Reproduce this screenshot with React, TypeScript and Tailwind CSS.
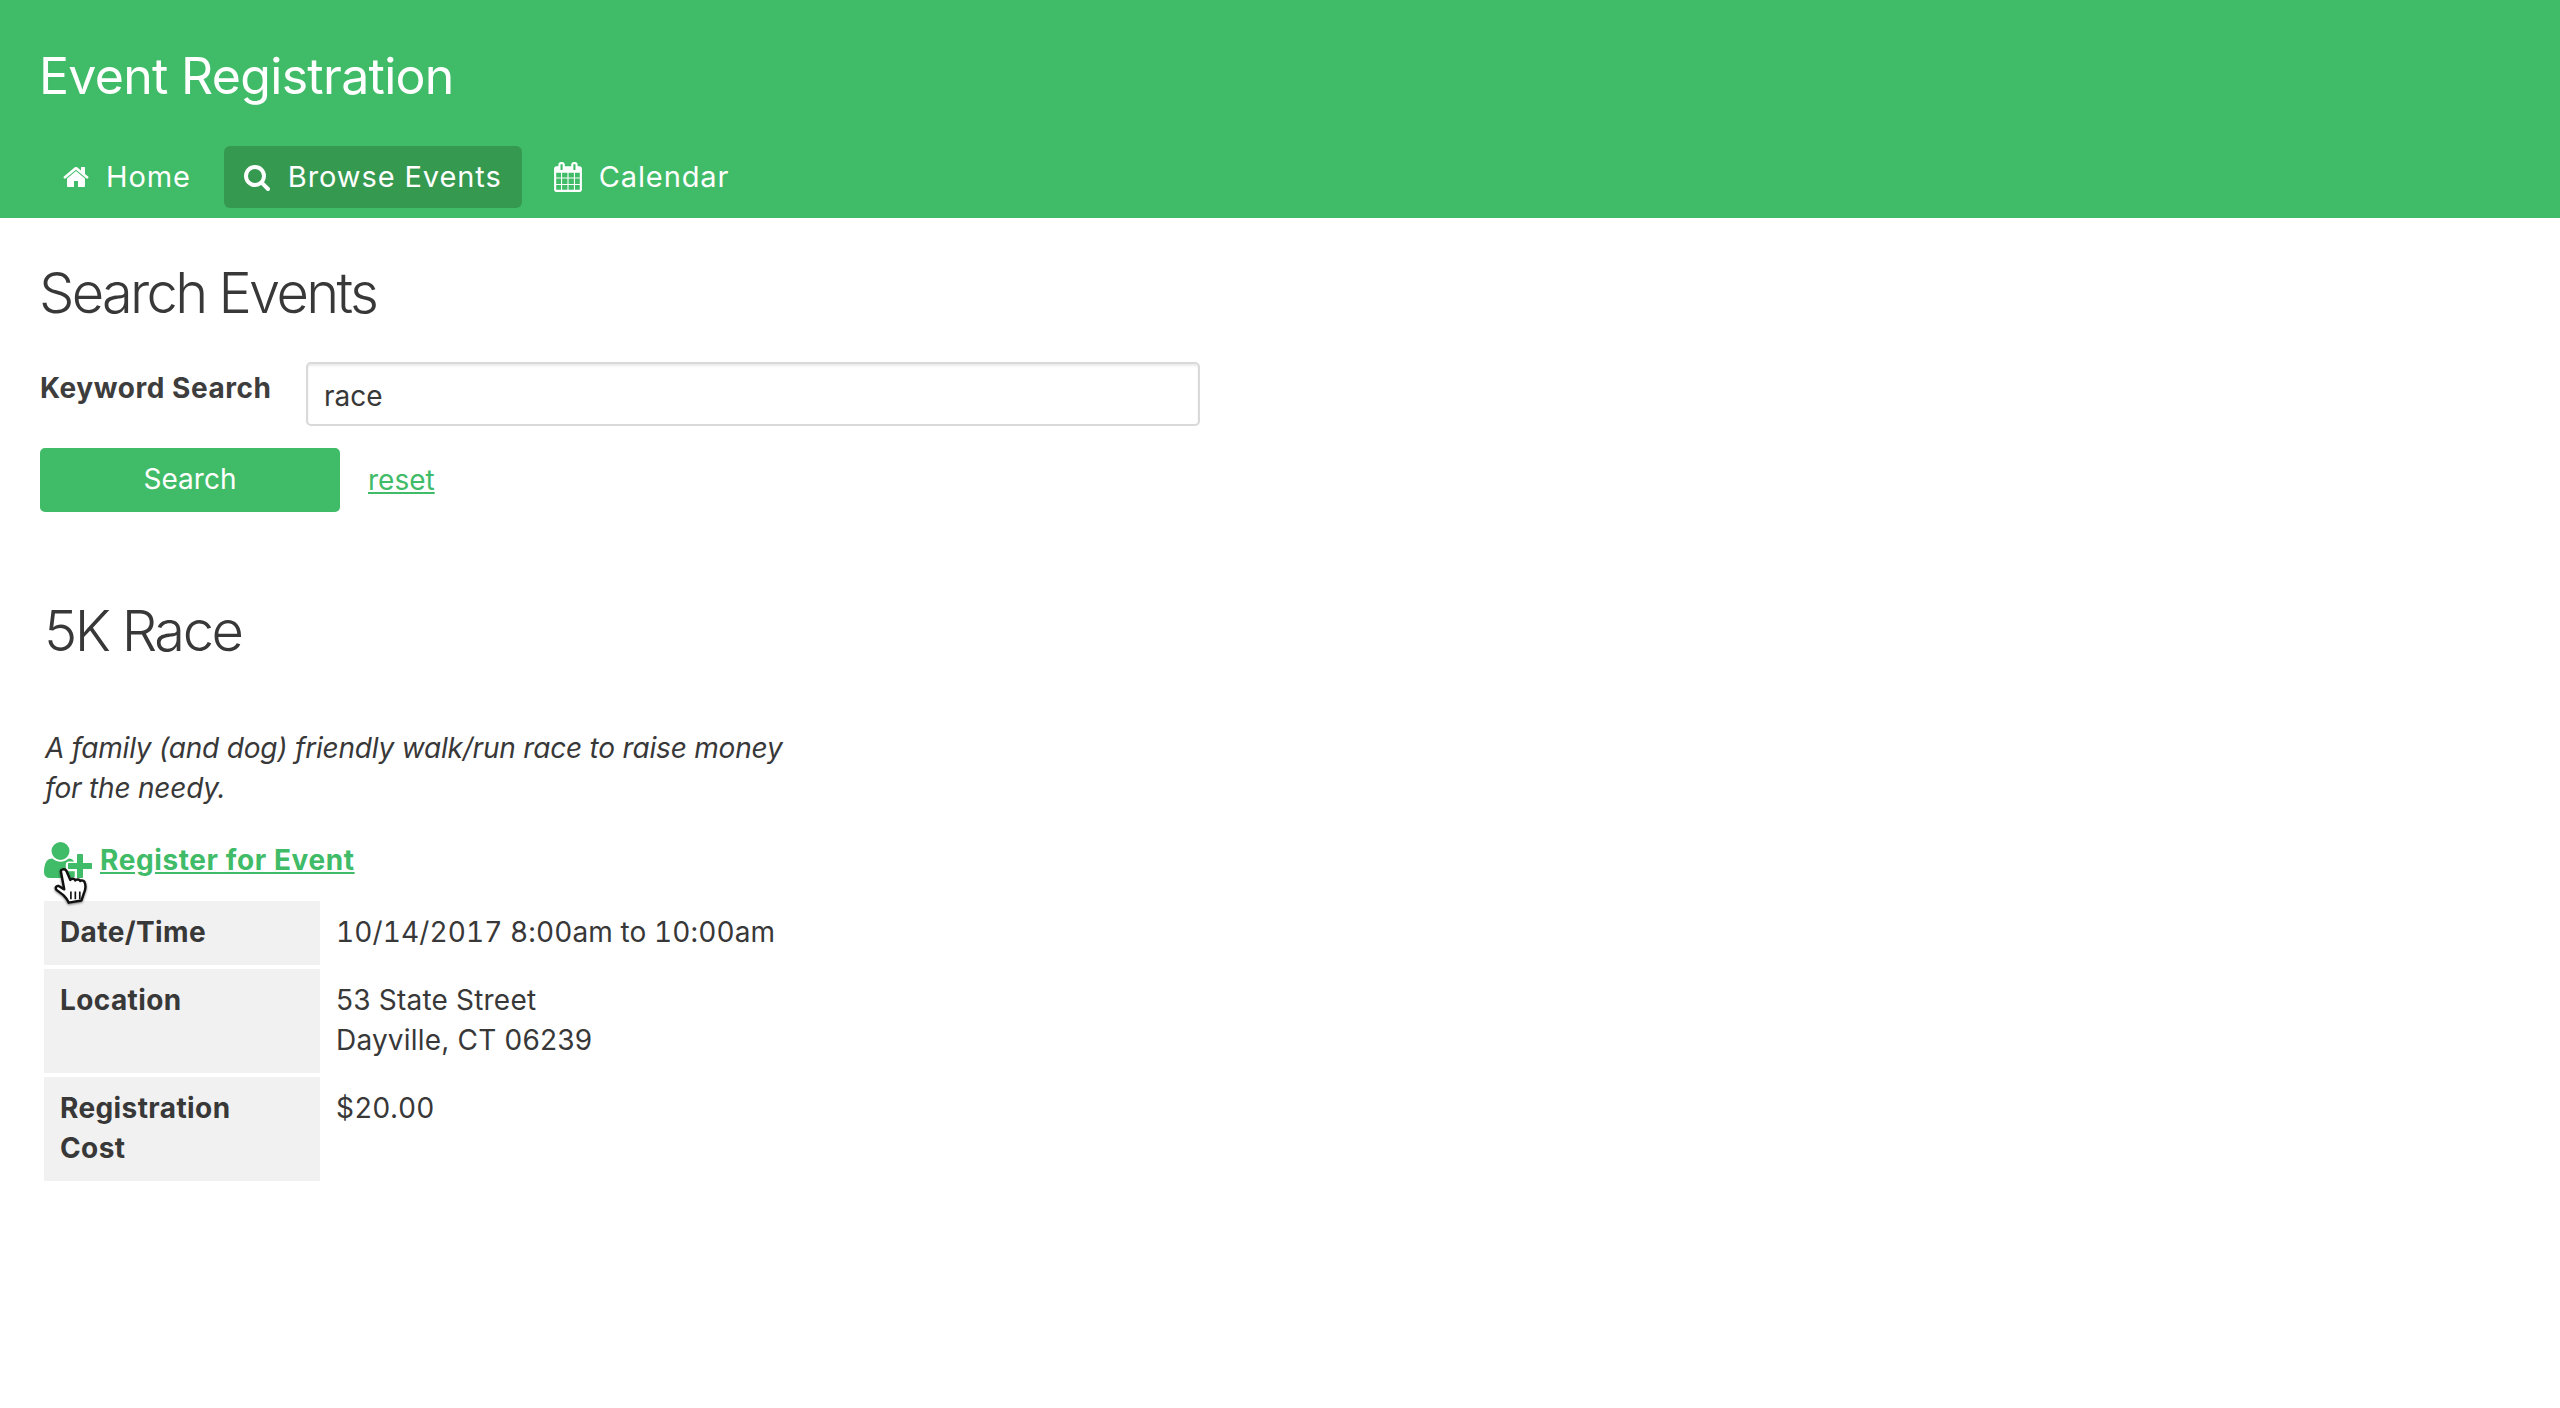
export default function App() {
  return (
    <div className="min-h-[1408px] bg-white text-[#383838] font-['Inter','Liberation_Sans',sans-serif] text-[28px] leading-[40px]">
      <header className="h-[218px] bg-[#40bb67] px-10 flex flex-col text-white">
        <h1 className="text-[50px] leading-[60px] font-normal mt-[46px] -ml-[1px] tracking-[-0.7px]">Event Registration</h1>
        <nav className="mt-[40px] flex gap-[11px] text-[29px] tracking-[0.9px]">
          <a className="h-[62px] px-[22px] flex items-center gap-[16px] rounded-md">
            <svg className="w-[28px] h-[28px]" viewBox="0 0 1792 1792" fill="currentColor"><path d="M1472 992v480q0 26-19 45t-45 19h-384v-384h-256v384h-384q-26 0-45-19t-19-45v-480q0-1 .5-3t.5-3l575-474 575 474q1 2 1 6zm223-69l-62 74q-8 9-21 11h-3q-13 0-21-7l-692-577-692 577q-12 8-24 7-13-2-21-11l-62-74q-8-10-7-23.5t11-21.5l719-599q32-26 76-26t76 26l244 204v-195q0-14 9-23t23-9h192q14 0 23 9t9 23v408l219 182q10 8 11 21.5t-7 23.5z" /></svg>
            Home
          </a>
          <a className="h-[62px] pl-[19px] pr-[20px] flex items-center gap-[17px] rounded-md bg-[#35994f]">
            <svg className="w-[28px] h-[28px]" viewBox="0 0 1792 1792" fill="currentColor"><path d="M1216 832q0-185-131.500-316.500t-316.500-131.500-316.500 131.500-131.500 316.500 131.500 316.500 316.500 131.500 316.500-131.500 131.500-316.500zm512 832q0 52-38 90t-90 38q-54 0-90-38l-343-342q-179 124-399 124-143 0-273.500-55.500t-225-150-150-225-55.500-273.500 55.500-273.500 150-225 225-150 273.500-55.500 273.500 55.500 225 150 150 225 55.500 273.500q0 220-124 399l343 343q37 37 37 90z" /></svg>
            Browse Events
          </a>
          <a className="h-[62px] px-[20px] flex items-center gap-[16px] rounded-md">
            <svg className="w-[30px] h-[30px]" viewBox="0 0 1664 1792" fill="currentColor"><path d="M128 1664h288v-288h-288v288zm352 0h320v-288h-320v288zm-352-352h288v-320h-288v320zm352 0h320v-320h-320v320zm-352-384h288v-288h-288v288zm736 736h320v-288h-320v288zm-384-736h320v-288h-320v288zm768 736h288v-288h-288v288zm-384-352h320v-320h-320v320zm-352-864v-288q0-13-9.500-22.500t-22.500-9.500h-64q-13 0-22.500 9.500t-9.500 22.500v288q0 13 9.500 22.500t22.500 9.500h64q13 0 22.500-9.500t9.500-22.500zm736 864h288v-320h-288v320zm-384-384h320v-288h-320v288zm384 0h288v-288h-288v288zm32-480v-288q0-13-9.500-22.500t-22.500-9.500h-64q-13 0-22.500 9.500t-9.500 22.500v288q0 13 9.500 22.500t22.500 9.500h64q13 0 22.500-9.500t9.500-22.500zm384-64v1280q0 52-38 90t-90 38h-1408q-52 0-90-38t-38-90v-1280q0-52 38-90t90-38h128v-96q0-66 47-113t113-47h64q66 0 113 47t47 113v96h384v-96q0-66 47-113t113-47h64q66 0 113 47t47 113v96h128q52 0 90 38t38 90z" /></svg>
            Calendar
          </a>
        </nav>
      </header>
      <main className="px-10">
        <h2 className="text-[56px] leading-[70px] font-light mt-[40px] -ml-[1px] tracking-[-2.7px]">Search Events</h2>
        <div className="flex mt-[34px] items-start">
          <label className="w-[266px] font-bold pt-[6px] tracking-[0.55px] text-[#3d3d3d]">Keyword Search</label>
          <input readOnly value="race" className="w-[894px] h-[64px] border-2 border-[#d9d9d9] rounded-[5px] px-[16px] pt-[3px] shadow-[inset_0_2px_2px_rgba(0,0,0,0.08)] outline-none" />
        </div>
        <div className="flex items-center mt-[22px]">
          <button className="w-[300px] h-[64px] bg-[#40bb67] text-white rounded-[5px] pb-[2px]">Search</button>
          <a className="ml-[28px] text-[#40bb67] underline">reset</a>
        </div>
        <div className="pl-[4px] mt-[84px]">
          <h2 className="text-[56px] leading-[70px] font-light tracking-[-2.5px]">5K Race</h2>
          <p className="italic w-[760px] mt-[62px] pl-[1px] tracking-[-0.2px]">A family (and dog) friendly walk/run race to raise money for the needy.</p>
          <div className="relative flex items-center mt-[32px] h-[40px]">
            <svg className="w-[48px] h-[42px]" viewBox="0 0 2048 1792" fill="#40bb67"><path d="M704 896q-159 0-271.500-112.500t-112.500-271.500 112.500-271.500 271.500-112.500 271.500 112.500 112.500 271.500-112.500 271.500-271.500 112.500zm960 128h352q13 0 22.500 9.500t9.500 22.500v192q0 13-9.500 22.500t-22.500 9.500h-352v352q0 13-9.500 22.500t-22.500 9.500h-192q-13 0-22.500-9.500t-9.500-22.500v-352h-352q-13 0-22.500-9.500t-9.500-22.500v-192q0-13 9.500-22.500t22.500-9.500h352v-352q0-13 9.500-22.500t22.500-9.500h192q13 0 22.500 9.500t9.500 22.500v352zm-736 224q0 52 38 90t90 38h256v238q-68 50-171 50h-874q-121 0-194-69t-73-190q0-53 3.500-103.500t14-109 26.500-108.500 43-97.500 62-81 85.500-53.500 111.500-20q19 0 39 17 79 61 154.500 91.500t164.500 30.500 164.500-30.500 154.500-91.500q20-17 39-17 78 0 133 33t90 90h-228q-52 0-90 38t-38 90v192z" /></svg>
            <a className="ml-[8px] font-bold text-[#40bb67] underline tracking-[0.6px]">Register for Event</a>
            <svg className="absolute left-[9px] top-[26px] w-[38px] h-[40px] drop-shadow-[0_1px_1px_rgba(0,0,0,0.5)]" viewBox="0 0 34 36">
              <path d="M7 5c0-2 3.500-3 5-.5l3.500 8c1-1.500 4-1.500 4.500.5 1-1.500 4-1 4.500.5 1-1 3.500-.5 4 1.500 1 3 .5 7-1 10l-2 6-11.500 2c-1-3-3-5-5-7l-6-4.500c-1.500-2 0-4 2-3.500l5 3z" fill="#fff" stroke="#111" strokeWidth="2.2" strokeLinejoin="round" />
              <path d="M16 23v7M20 23v7M24 23v7" stroke="#111" strokeWidth="1.500" />
            </svg>
          </div>
          <table className="mt-[17px] border-separate border-spacing-x-0 border-spacing-y-[4px]">
            <tbody>
              <tr>
                <th className="w-[276px] bg-[#f1f1f1] text-left align-top font-bold px-[16px] pt-[11px] pb-[13px] tracking-[0.4px]">Date/Time</th>
                <td className="px-[16px] pt-[11px] align-top tracking-[0.1px] tabular-nums">10/14/2017 8:00am to 10:00am</td>
              </tr>
              <tr>
                <th className="bg-[#f1f1f1] text-left align-top font-bold px-[16px] pt-[11px] pb-[13px] tracking-[0.4px]">Location</th>
                <td className="px-[16px] pt-[11px] pb-[13px] align-top tracking-[0.2px]">53 State Street<br />Dayville, CT 06239</td>
              </tr>
              <tr>
                <th className="bg-[#f1f1f1] text-left align-top font-bold px-[16px] pt-[11px] pb-[13px] tracking-[0.4px]">Registration<br />Cost</th>
                <td className="px-[16px] pt-[11px] align-top tracking-[0.7px]">$20.00</td>
              </tr>
            </tbody>
          </table>
        </div>
      </main>
    </div>
  );
}
